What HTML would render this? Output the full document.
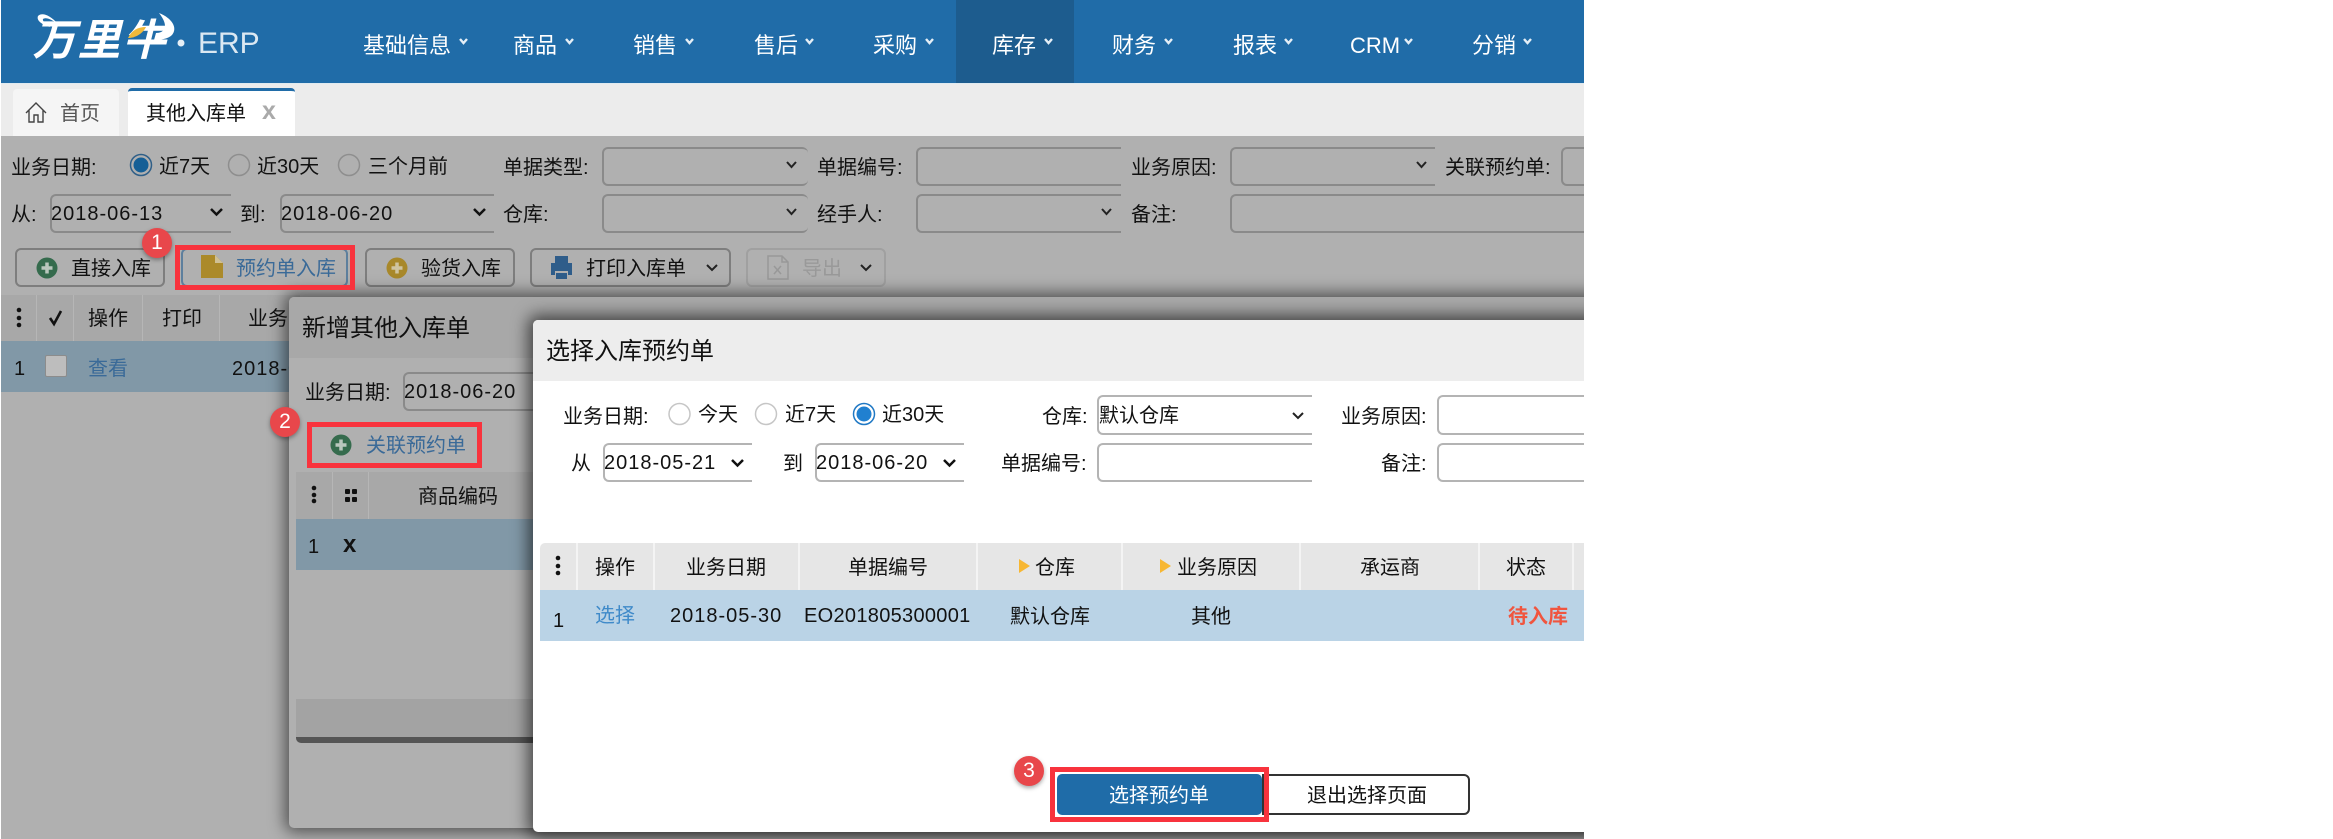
<!DOCTYPE html>
<html lang="zh"><head><meta charset="utf-8"><title>其他入库单</title>
<style>
html,body{margin:0;padding:0;background:#fff}
body{width:2333px;height:839px;overflow:hidden;position:relative;font-family:"Liberation Sans","Noto Sans CJK SC",sans-serif;font-size:20px;color:#111}
#r{position:absolute;left:1px;top:0;width:1583px;height:839px;overflow:hidden;background:#b0b0b0}
#w{position:absolute;left:-1px;top:0;width:1584px;height:839px}
.a{position:absolute;box-sizing:border-box}
.t{position:absolute;white-space:nowrap;height:30px;line-height:30px;margin-top:1px}
.d{letter-spacing:1px}
.i{position:absolute;box-sizing:border-box;border:2px solid #8a8a8a;border-radius:6px}
.n{border-right:none;border-radius:6px 0 0 6px}
.w{border-color:#b4b4b4;background:#fff}
.nav{color:#fff;font-size:22px}
.btn{position:absolute;box-sizing:border-box;border:2px solid #7e7e7e;border-radius:6px;height:39px;top:248px}
svg.l{position:absolute;left:0;top:0;overflow:visible}
.blue{color:#3a6a98}
.badge{position:absolute;width:30px;height:30px;border-radius:50%;background:#e8474b;color:#fff;text-align:center;line-height:30px;font-size:21px;box-shadow:0 2px 4px rgba(0,0,0,.35)}
.red{position:absolute;box-sizing:border-box;border:5px solid #f8333d}
</style></head><body>
<div id="r"><div id="w">

<!-- header -->
<div class="a" style="left:0;top:0;width:1584px;height:83px;background:#206ca8"></div>
<div class="a" style="left:956px;top:0;width:118px;height:83px;background:#1d5c8e"></div>
<div class="t" style="left:36px;top:17px;height:46px;line-height:46px;font-size:43px;font-weight:bold;color:#fff;transform:skewX(-14deg);letter-spacing:2px">万里牛</div>
<div class="t" style="left:198px;top:28px;line-height:30px;font-size:30px;color:#dbe8f2">ERP</div>
<div class="t nav" style="left:363px;top:30px">基础信息</div>
<div class="t nav" style="left:513px;top:30px">商品</div>
<div class="t nav" style="left:633px;top:30px">销售</div>
<div class="t nav" style="left:754px;top:30px">售后</div>
<div class="t nav" style="left:873px;top:30px">采购</div>
<div class="t nav" style="left:992px;top:30px">库存</div>
<div class="t nav" style="left:1112px;top:30px">财务</div>
<div class="t nav" style="left:1233px;top:30px">报表</div>
<div class="t nav" style="left:1350px;top:30px;letter-spacing:0">CRM</div>
<div class="t nav" style="left:1472px;top:30px">分销</div>

<!-- tabs -->
<div class="a" style="left:0;top:83px;width:1584px;height:53px;background:#ececec;border-top:1px solid #dfeaf0"></div>
<div class="a" style="left:13px;top:89px;width:106px;height:47px;background:#f5f5f5;border-radius:4px 4px 0 0"></div>
<div class="a" style="left:128px;top:88px;width:167px;height:48px;background:#fff;border-top:3px solid #206ca8;border-radius:4px 4px 0 0"></div>
<div class="t" style="left:60px;top:98px;color:#555">首页</div>
<div class="t" style="left:146px;top:98px;color:#111">其他入库单</div>
<div class="t" style="left:262px;top:95px;color:#aaa;font-weight:bold;font-size:25px">x</div>

<!-- filter -->
<div class="t" style="left:11px;top:152px">业务日期:</div>
<div class="t" style="left:159px;top:151px">近7天</div>
<div class="t" style="left:257px;top:151px">近30天</div>
<div class="t" style="left:368px;top:151px">三个月前</div>
<div class="t" style="left:503px;top:152px">单据类型:</div>
<div class="i" style="left:602px;top:147px;width:206px;height:39px;border-right:none"></div>
<div class="t" style="left:817px;top:152px">单据编号:</div>
<div class="i n" style="left:916px;top:147px;width:205px;height:39px"></div>
<div class="t" style="left:1131px;top:152px">业务原因:</div>
<div class="i n" style="left:1230px;top:147px;width:205px;height:39px"></div>
<div class="t" style="left:1445px;top:152px">关联预约单:</div>
<div class="i n" style="left:1561px;top:147px;width:30px;height:39px"></div>

<div class="t" style="left:11px;top:199px">从:</div>
<div class="i n" style="left:50px;top:194px;width:181px;height:39px"></div>
<div class="t d" style="left:51px;top:198px">2018-06-13</div>
<div class="t" style="left:240px;top:199px">到:</div>
<div class="i n" style="left:280px;top:194px;width:214px;height:39px"></div>
<div class="t d" style="left:281px;top:198px">2018-06-20</div>
<div class="t" style="left:503px;top:199px">仓库:</div>
<div class="i" style="left:602px;top:194px;width:206px;height:39px;border-right:none"></div>
<div class="t" style="left:817px;top:199px">经手人:</div>
<div class="i n" style="left:916px;top:194px;width:205px;height:39px"></div>
<div class="t" style="left:1131px;top:199px">备注:</div>
<div class="i n" style="left:1230px;top:194px;width:370px;height:39px"></div>

<!-- buttons -->
<div class="btn" style="left:15px;width:150px"></div>
<div class="btn" style="left:181px;width:167px;border-color:#5d7f9d"></div>
<div class="btn" style="left:365px;width:150px"></div>
<div class="btn" style="left:530px;width:201px"></div>
<div class="btn" style="left:746px;width:140px;border-color:#a0a0a0"></div>
<div class="t" style="left:71px;top:253px">直接入库</div>
<div class="t blue" style="left:236px;top:253px">预约单入库</div>
<div class="t" style="left:421px;top:253px">验货入库</div>
<div class="t" style="left:586px;top:253px">打印入库单</div>
<div class="t" style="left:802px;top:253px;color:#999">导出</div>

<!-- grid 1 -->
<div class="a" style="left:0;top:295px;width:300px;height:46px;background:#a8a8a8"></div>
<div class="a" style="left:36px;top:295px;width:1px;height:46px;background:#b6b6b6"></div>
<div class="a" style="left:73px;top:295px;width:1px;height:46px;background:#b6b6b6"></div>
<div class="a" style="left:142px;top:295px;width:1px;height:46px;background:#b6b6b6"></div>
<div class="a" style="left:219px;top:295px;width:1px;height:46px;background:#b6b6b6"></div>
<div class="a" style="left:0;top:341px;width:300px;height:51px;background:#8198a7"></div>
<div class="t" style="left:88px;top:303px">操作</div>
<div class="t" style="left:162px;top:303px">打印</div>
<div class="t" style="left:248px;top:303px">业务</div>
<div class="t" style="left:14px;top:353px">1</div>
<div class="a" style="left:45px;top:355px;width:22px;height:22px;background:#bdbdbd;border:1px solid #8c8c8c;border-radius:2px"></div>
<div class="t blue" style="left:88px;top:353px">查看</div>
<div class="t d" style="left:232px;top:353px">2018-06-20</div>

<svg class="l" width="1584" height="839">
 <!-- logo decoration -->
 <path d="M58 24C50 15 42 12 38 16C36 21 43 25 50 27C46 24 42 21 43 19C46 17 51 19 58 24Z" fill="#fff"/>
 <path d="M159 13C172 18 178 28 172 35C168 39 160 40 154 40L156 33C164 33 170 27 159 13Z" fill="#fff"/>
 <path d="M128 38C132 30 138 27 146 27C143 33 136 38 128 38Z" fill="#f0b93a"/>
 <circle cx="181" cy="43" r="3.500" fill="#e6eff6"/>
 <!-- nav carets -->
 <g fill="none" stroke="#e4eef6" stroke-width="2.400">
  <path d="M460 39l3.500 4 3.500-4"/><path d="M566 39l3.500 4 3.500-4"/><path d="M686 39l3.500 4 3.500-4"/><path d="M806 39l3.500 4 3.500-4"/><path d="M926 39l3.500 4 3.500-4"/><path d="M1045 39l3.500 4 3.500-4"/><path d="M1165 39l3.500 4 3.500-4"/><path d="M1285 39l3.500 4 3.500-4"/><path d="M1405 39l3.500 4 3.500-4"/><path d="M1524 39l3.500 4 3.500-4"/>
 </g>
 <!-- home -->
 <path d="M26 113L36 103L46 113M29 110.500V122H34V115H38V122H43V110.500" fill="none" stroke="#444" stroke-width="1.400"/>
 <!-- radios -->
 <circle cx="141" cy="165" r="10.500" fill="#b0b0b0" stroke="#2f5f88" stroke-width="1.500"/><circle cx="141" cy="165" r="7.500" fill="#155f96"/>
 <circle cx="239" cy="165" r="10.500" fill="#b0b0b0" stroke="#8e8e8e" stroke-width="1.500"/>
 <circle cx="349" cy="165" r="10.500" fill="#b0b0b0" stroke="#8e8e8e" stroke-width="1.500"/>
 <!-- chevrons -->
 <g fill="none" stroke="#111" stroke-width="2.500">
  <path d="M211 209l5.500 5.500 5.500-5.500"/><path d="M474 209l5.500 5.500 5.500-5.500"/>
 </g>
 <g fill="none" stroke="#222" stroke-width="2">
  <path d="M787 162l4.500 5 4.500-5"/><path d="M787 209l4.500 5 4.500-5"/>
  <path d="M1417 162l4.500 5 4.500-5"/><path d="M1102 209l4.500 5 4.500-5"/>
  <path d="M707 265l5 5 5-5"/><path d="M861 265l5 5 5-5"/>
 </g>
 <!-- btn icons -->
 <circle cx="47" cy="268" r="10.500" fill="#356b4d"/><path d="M47 262.500v11M41.500 268h11" stroke="#b9c7bd" stroke-width="3.500"/>
 <path d="M201 255H215L223 263V278H201Z" fill="#ab8a2a"/><path d="M215 255V263H223Z" fill="#cfc095"/>
 <circle cx="397" cy="268" r="10.500" fill="#a8882a"/><path d="M397 262.500v11M391.500 268h11" stroke="#cfc4a0" stroke-width="3.500"/>
 <path d="M555 256H568V263H555ZM551 263H572V275H568V271H555V275H551ZM556 273H567V279H556Z" fill="#2f5d8a"/>
 <path d="M768 256H782L788 262V279H768ZM782 256V262H788" fill="none" stroke="#989898" stroke-width="1.500"/><path d="M774 266l7 8M781 266l-7 8" stroke="#989898" stroke-width="1.500"/>
 <!-- grid1 icons -->
 <g fill="#111"><circle cx="19" cy="310" r="2.300"/><circle cx="19" cy="318" r="2.300"/><circle cx="19" cy="325" r="2.300"/></g>
 <path d="M50 318l4 6 7-13" fill="none" stroke="#111" stroke-width="2.600"/>
</svg>

<!-- MODAL 1 -->
<div class="a" style="left:289px;top:297px;width:1400px;height:531px;background:#b0b0b0;border-radius:5px;box-shadow:0 0 16px 4px rgba(0,0,0,.55)">
 <div class="a" style="left:0;top:0;width:100%;height:61px;background:#a8a8a8;border-radius:5px 5px 0 0"></div>
</div>
<div class="t" style="left:302px;top:313px;font-size:24px">新增其他入库单</div>
<div class="t" style="left:305px;top:377px">业务日期:</div>
<div class="i n" style="left:403px;top:372px;width:140px;height:39px"></div>
<div class="t d" style="left:404px;top:376px">2018-06-20</div>
<div class="t blue" style="left:366px;top:430px">关联预约单</div>
<div class="a" style="left:296px;top:472px;width:260px;height:47px;background:#a8a8a8"></div>
<div class="a" style="left:332px;top:472px;width:1px;height:47px;background:#b6b6b6"></div>
<div class="a" style="left:368px;top:472px;width:1px;height:47px;background:#b6b6b6"></div>
<div class="a" style="left:296px;top:519px;width:260px;height:51px;background:#8198a7"></div>
<div class="t" style="left:418px;top:481px">商品编码</div>
<div class="t" style="left:308px;top:531px">1</div>
<div class="t" style="left:343px;top:529px;font-weight:bold;font-size:24px">x</div>
<div class="a" style="left:296px;top:699px;width:260px;height:38px;background:#a3a3a3"></div>
<div class="a" style="left:296px;top:737px;width:260px;height:6px;background:#555;border-radius:0 0 0 5px"></div>
<svg class="l" width="1584" height="839">
 <circle cx="341" cy="445" r="10.500" fill="#356b4d"/><path d="M341 439.500v11M335.500 445h11" stroke="#b9c7bd" stroke-width="3.500"/>
 <g fill="#111"><circle cx="314" cy="488" r="2.300"/><circle cx="314" cy="495" r="2.300"/><circle cx="314" cy="501" r="2.300"/></g>
 <g fill="#111"><rect x="345" y="489" width="5" height="5" rx="1"/><rect x="352" y="489" width="5" height="5" rx="1"/><rect x="345" y="497" width="5" height="5" rx="1"/><rect x="352" y="497" width="5" height="5" rx="1"/></g>
</svg>

<!-- MODAL 2 -->
<div class="a" style="left:533px;top:320px;width:1200px;height:512px;background:#fff;border-radius:5px;box-shadow:0 0 16px 5px rgba(0,0,0,.6)">
 <div class="a" style="left:0;top:0;width:100%;height:61px;background:#ededed;border-radius:5px 5px 0 0"></div>
</div>
<div class="t" style="left:546px;top:336px;font-size:24px">选择入库预约单</div>
<div class="t" style="left:563px;top:401px">业务日期:</div>
<div class="t" style="left:698px;top:399px">今天</div>
<div class="t" style="left:785px;top:399px">近7天</div>
<div class="t" style="left:882px;top:399px">近30天</div>
<div class="t" style="left:1042px;top:401px">仓库:</div>
<div class="i n w" style="left:1097px;top:395px;width:215px;height:40px"></div>
<div class="t" style="left:1099px;top:400px">默认仓库</div>
<div class="t" style="left:1341px;top:401px">业务原因:</div>
<div class="i n w" style="left:1437px;top:395px;width:200px;height:40px"></div>
<div class="t" style="left:571px;top:448px">从</div>
<div class="i n w" style="left:603px;top:443px;width:149px;height:39px"></div>
<div class="t d" style="left:604px;top:447px">2018-05-21</div>
<div class="t" style="left:783px;top:448px">到</div>
<div class="i n w" style="left:815px;top:443px;width:149px;height:39px"></div>
<div class="t d" style="left:816px;top:447px">2018-06-20</div>
<div class="t" style="left:1001px;top:448px">单据编号:</div>
<div class="i n w" style="left:1097px;top:443px;width:215px;height:39px"></div>
<div class="t" style="left:1381px;top:448px">备注:</div>
<div class="i n w" style="left:1437px;top:443px;width:200px;height:39px"></div>

<div class="a" style="left:540px;top:543px;width:1044px;height:47px;background:#e6e6e6;border-radius:5px 0 0 0"></div>
<div class="a" style="left:576px;top:543px;width:2px;height:47px;background:#f4f4f4"></div>
<div class="a" style="left:653px;top:543px;width:2px;height:47px;background:#f4f4f4"></div>
<div class="a" style="left:798px;top:543px;width:2px;height:47px;background:#f4f4f4"></div>
<div class="a" style="left:976px;top:543px;width:2px;height:47px;background:#f4f4f4"></div>
<div class="a" style="left:1121px;top:543px;width:2px;height:47px;background:#f4f4f4"></div>
<div class="a" style="left:1299px;top:543px;width:2px;height:47px;background:#f4f4f4"></div>
<div class="a" style="left:1478px;top:543px;width:2px;height:47px;background:#f4f4f4"></div>
<div class="a" style="left:1572px;top:543px;width:2px;height:47px;background:#f4f4f4"></div>
<div class="a" style="left:540px;top:590px;width:1044px;height:51px;background:#bad3e6"></div>
<div class="t" style="left:595px;top:552px">操作</div>
<div class="t" style="left:686px;top:552px">业务日期</div>
<div class="t" style="left:848px;top:552px">单据编号</div>
<div class="t" style="left:1035px;top:552px">仓库</div>
<div class="t" style="left:1177px;top:552px">业务原因</div>
<div class="t" style="left:1360px;top:552px">承运商</div>
<div class="t" style="left:1506px;top:552px">状态</div>
<div class="t" style="left:553px;top:605px">1</div>
<div class="t" style="left:595px;top:600px;color:#3f8ac9">选择</div>
<div class="t d" style="left:670px;top:600px">2018-05-30</div>
<div class="t d" style="left:804px;top:600px;letter-spacing:.3px">EO201805300001</div>
<div class="t" style="left:1010px;top:601px">默认仓库</div>
<div class="t" style="left:1191px;top:601px">其他</div>
<div class="t" style="left:1508px;top:601px;color:#f0553f;font-weight:bold">待入库</div>

<div class="a" style="left:1057px;top:774px;width:205px;height:41px;background:#1f6ca8;border-radius:5px"></div>
<div class="t" style="left:1109px;top:780px;color:#fff">选择预约单</div>
<div class="a" style="left:1262px;top:774px;width:208px;height:41px;background:#fff;border:2px solid #333;border-radius:0 6px 6px 0"></div>
<div class="t" style="left:1307px;top:780px">退出选择页面</div>

<svg class="l" width="1584" height="839">
 <circle cx="679.500" cy="414" r="10.500" fill="#fff" stroke="#c6c6c6" stroke-width="1.500"/>
 <circle cx="766" cy="414" r="10.500" fill="#fff" stroke="#c6c6c6" stroke-width="1.500"/>
 <circle cx="864" cy="414" r="10.500" fill="#fff" stroke="#1f78c4" stroke-width="1.500"/><circle cx="864" cy="414" r="7.500" fill="#2080d0"/>
 <g fill="none" stroke="#111" stroke-width="2.500"><path d="M732 460l5.500 5.500 5.500-5.500"/><path d="M944 460l5.500 5.500 5.500-5.500"/></g>
 <path d="M1293 413l5 5 5-5" fill="none" stroke="#222" stroke-width="2"/>
 <g fill="#111"><circle cx="558" cy="558" r="2.300"/><circle cx="558" cy="566" r="2.300"/><circle cx="558" cy="573" r="2.300"/></g>
 <path d="M1019 559L1030 566L1019 573Z" fill="#f7b733"/>
 <path d="M1160 559L1171 566L1160 573Z" fill="#f7b733"/>
</svg>

<!-- annotations -->
<div class="red" style="left:175px;top:245px;width:180px;height:45px"></div>
<div class="badge" style="left:142px;top:228px">1</div>
<div class="red" style="left:307px;top:422px;width:175px;height:46px"></div>
<div class="badge" style="left:270px;top:407px">2</div>
<div class="red" style="left:1050px;top:767px;width:219px;height:55px"></div>
<div class="badge" style="left:1014px;top:756px">3</div>

</div></div>
</body></html>
